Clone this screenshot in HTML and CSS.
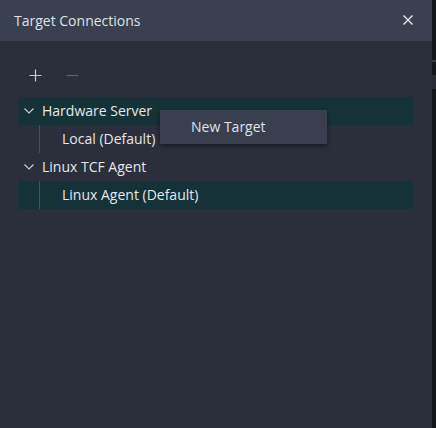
FILE: index.html
```html
<!DOCTYPE html>
<html>
<head>
<meta charset="utf-8">
<link rel="stylesheet" href="styles.css">
</head>
<body>
<div class="screen">
  <div class="dialog">
    <div class="titlebar">
      <span class="title">Target Connections</span>
      <svg class="close" width="10" height="10" viewBox="0 0 10 10"><path d="M0.5 0.5L9.5 9.5M9.5 0.5L0.5 9.5" stroke="#e8e8ec" stroke-width="1.4" fill="none"/></svg>
    </div>
    <div class="content">
      <div class="toolbar">
        <svg class="tool" width="13" height="13" viewBox="0 0 13 13"><path d="M6.5 0.5V12.5M0.5 6.5H12.5" stroke="#c9ccd4" stroke-width="1.2" fill="none"/></svg>
        <svg class="tool dim" width="13" height="13" viewBox="0 0 13 13"><path d="M0.5 6.5H12.5" stroke="#5a5f6d" stroke-width="1.2" fill="none"/></svg>
      </div>
      <div class="tree">
        <div class="row selected">
          <svg class="chev" width="10" height="6" viewBox="0 0 10 6"><path d="M0.5 0.5L5 5L9.5 0.5" stroke="#cfd2d8" stroke-width="1.1" fill="none"/></svg>
          <span class="label">Hardware Server</span>
        </div>
        <div class="row child">
          <span class="guide"></span>
          <span class="label">Local (Default)</span>
        </div>
        <div class="row">
          <svg class="chev" width="10" height="6" viewBox="0 0 10 6"><path d="M0.5 0.5L5 5L9.5 0.5" stroke="#cfd2d8" stroke-width="1.1" fill="none"/></svg>
          <span class="label">Linux TCF Agent</span>
        </div>
        <div class="row child selected">
          <span class="guide"></span>
          <span class="label">Linux Agent (Default)</span>
        </div>
      </div>
      <div class="menu">
        <div class="menu-item">New Target</div>
      </div>
    </div>
  </div>
  <div class="edge">
    <span class="mark m1"></span>
    <span class="mark m2"></span>
  </div>
</div>
</body>
</html>
```
FILE: styles.css
```css
html, body {
  margin: 0;
  padding: 0;
  background: #15161c;
}
body {
  font-family: "Open Sans", "Noto Sans", sans-serif;
  color: #e4e6ea;
}
.screen {
  display: flex;
  width: 436px;
  height: 428px;
  overflow: hidden;
}
.dialog {
  width: 432px;
  height: 428px;
  display: flex;
  flex-direction: column;
  background: #2b2f3b;
}
.titlebar {
  height: 41px;
  flex: none;
  background: #3b4050;
  display: flex;
  align-items: center;
  justify-content: space-between;
  padding: 0 19px 0 14px;
}
.title {
  font-size: 14px;
  color: #dfe1e6;
}
.close {
  display: block;
  margin-top: -1px;
}
.content {
  position: relative;
  flex: 1;
  padding: 0 19px 0 18px;
}
.toolbar {
  display: flex;
  gap: 24px;
  padding: 28px 0 0 11px;
  height: 28px;
}
.tool {
  display: block;
}
.tree {
  display: flex;
  flex-direction: column;
}
.row {
  height: 28px;
  display: flex;
  align-items: center;
  font-size: 14px;
  color: #e4e6ea;
  padding-left: 6px;
}
.label {
  margin-top: -2px;
}
.row.selected {
  background: #163239;
}
.chev {
  display: block;
  margin-right: 8px;
}
.child {
  padding-left: 21px;
}
.guide {
  align-self: stretch;
  width: 1px;
  background: #4a505e;
  margin-right: 22px;
}
.menu {
  position: absolute;
  left: 160px;
  top: 69px;
  width: 167px;
  height: 34px;
  background: #3a3f50;
  box-shadow: 0 2px 5px rgba(0, 0, 0, 0.45);
  display: flex;
  align-items: center;
}
.menu-item {
  padding-left: 31px;
  padding-bottom: 2px;
  font-size: 14px;
  color: #dfe1e6;
}
.edge {
  position: relative;
  width: 4px;
  background: #15161c;
}
.mark {
  position: absolute;
  left: 0;
  width: 4px;
  background: #3a3d48;
}
.m1 { top: 60px; height: 2px; }
.m2 { top: 75px; height: 14px; background: #2a2c35; }
```
